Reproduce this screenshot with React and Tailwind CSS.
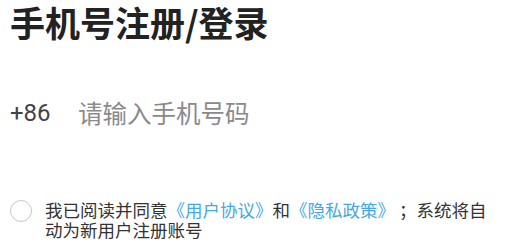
export default function App() {
  const font = { fontFamily: '"Noto Sans CJK SC", "Noto Sans", sans-serif' };
  return (
    <div className="w-[506px] h-[244px] bg-white overflow-hidden" style={font}>
      <div className="pl-[10px] pt-[2px]">
        <h1 className="text-[35px] leading-[40px] font-bold text-[#222] whitespace-nowrap">手机号注册/登录</h1>
      </div>
      <div className="mt-[53px] pl-[10px] flex items-center h-[36px]">
        <span className="text-[24px] text-[#444] w-[68px]" style={{ fontFamily: 'Roboto, "Noto Sans CJK SC", sans-serif' }}>+86</span>
        <span className="text-[24.5px] text-[#8a8a8a]">请输入手机号码</span>
      </div>
      <div className="mt-[69px] pl-[10px] pr-[10px] flex items-start">
        <div className="w-[22px] h-[22px] mt-[0px] rounded-full border border-[#c8c8c8] shrink-0" />
        <p className="ml-[13px] text-[17.5px] leading-[20px] text-[#333]">
          我已阅读并同意<span className="text-[#45a8e2]">《用户协议》</span>和<span className="text-[#45a8e2]">《隐私政策》</span> ；系统将自动为新用户注册账号
        </p>
      </div>
    </div>
  );
}
